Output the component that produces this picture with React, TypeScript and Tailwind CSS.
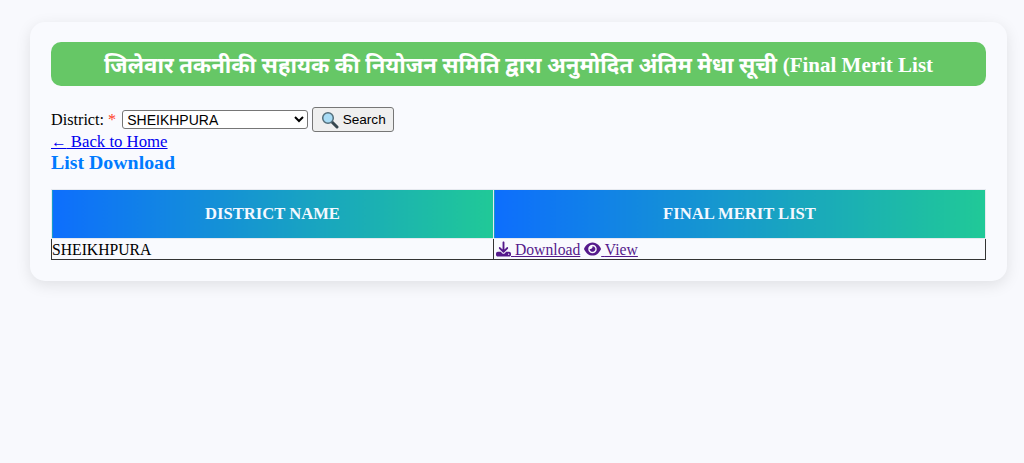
import React from 'react'

const serif = "font-['Liberation_Serif','Noto_Sans','Times_New_Roman',serif]"

const App = () => {
  return (
    <div className={`min-h-[463px] bg-[#f8f9fd] pl-[30px] pr-[17px] pt-[22px] text-black ${serif}`}>
      <div className="h-[259px] rounded-[15px] bg-[#f9fafe] px-[21px] pt-[20px] shadow-[0_4px_15px_rgba(0,0,0,0.1)]">
        <h1 className="mb-[21px] flex h-[44px] items-center justify-center overflow-hidden whitespace-nowrap rounded-[10px] bg-[#66c766] pt-[3px] text-center text-[22.1px] font-bold text-white">
          जिलेवार तकनीकी सहायक की नियोजन समिति द्वारा अनुमोदित अंतिम मेधा सूची&nbsp;<span className="text-[21px]">(Final Merit List</span>
        </h1>
        <div className="flex h-[25px] items-center text-[16.2px] leading-[18px]">
          <label className="mr-[6px]">District: <span className="text-[#ff3b1f]">*</span></label>
          <select defaultValue="SHEIKHPURA" className="mr-[4px] h-[19px] w-[186px] rounded-[3px] border border-[#767676] bg-white px-0 font-['Liberation_Sans',sans-serif] text-[14px]">
            <option>SHEIKHPURA</option>
          </select>
          <button className="flex h-[25px] w-[82px] items-center justify-center gap-[4px] rounded-[3px] border border-[#767676] bg-[#efefef] font-['Liberation_Sans',sans-serif] text-[13.6px]">
            <svg viewBox="0 0 18 18" className="h-[18px] w-[18px]">
              <line x1="10.500" y1="10.500" x2="16" y2="16" stroke="#37474f" strokeWidth="3" strokeLinecap="round" />
              <circle cx="7" cy="7" r="5.300" fill="#a9dcf5" stroke="#546e7a" strokeWidth="1.500" />
            </svg>
            <span>Search</span>
          </button>
        </div>
        <a href="#" className="mt-px block text-[16.75px] leading-[18px] text-[#0000ee] underline"><span className="text-[15.6px]">←</span> Back to Home</a>
        <h2 className="text-[19.85px] font-bold leading-[23px] text-[#007bff]">List Download</h2>
        <table className="mt-[15px] w-full border-collapse text-[15.7px]">
          <thead>
            <tr>
              <th className="h-[49px] w-[442px] border border-[#e6e9ef] bg-[linear-gradient(90deg,#0d6efd,#20c997)] text-[16.6px] font-bold text-[#f4f8ff]">DISTRICT NAME</th>
              <th className="h-[49px] border border-[#e6e9ef] bg-[linear-gradient(90deg,#0d6efd,#20c997)] text-[16.6px] font-bold text-[#f4f8ff]">FINAL MERIT LIST</th>
            </tr>
          </thead>
          <tbody>
            <tr>
              <td className="h-[21px] border border-[#333333] p-0 leading-[17px]">SHEIKHPURA</td>
              <td className="h-[21px] border border-[#333333] px-[2px] py-0 leading-[17px]">
                <a href="#" className="text-[#551a8b] underline">
                  <svg viewBox="0 0 512 512" className="inline h-[16px] w-[15px] align-[-2px] fill-current"><path d="M288 32c0-17.700-14.300-32-32-32s-32 14.300-32 32v242.700l-73.400-73.400c-12.500-12.500-32.800-12.500-45.300 0s-12.500 32.800 0 45.300l128 128c12.500 12.500 32.800 12.500 45.300 0l128-128c12.500-12.500 12.500-32.800 0-45.300s-32.800-12.500-45.300 0L288 274.700V32zM64 352c-35.300 0-64 28.700-64 64v32c0 35.300 28.700 64 64 64h384c35.300 0 64-28.700 64-64v-32c0-35.300-28.700-64-64-64H346.500l-45.300 45.300c-25 25-65.500 25-90.500 0L165.500 352H64zm368 56a24 24 0 1 1 0 48 24 24 0 1 1 0-48z" /></svg>
                  {' '}Download
                </a>{' '}
                <a href="#" className="text-[#551a8b] underline">
                  <svg viewBox="0 0 576 512" className="inline h-[16px] w-[17px] align-[-2px] fill-current"><path d="M288 32c-80.800 0-145.500 36.800-192.600 80.600C48.600 156 17.300 208 2.500 243.700c-3.300 7.900-3.300 16.700 0 24.600C17.300 304 48.600 356 95.400 399.400 142.500 443.200 207.200 480 288 480s145.500-36.800 192.600-80.600c46.800-43.500 78.100-95.400 93-131.100 3.300-7.900 3.300-16.700 0-24.600-14.900-35.700-46.200-87.700-93-131.100C433.500 68.800 368.800 32 288 32zM144 256a144 144 0 1 1 288 0 144 144 0 1 1-288 0zm144-64c0 35.300-28.700 64-64 64-7.100 0-13.900-1.200-20.300-3.300-5.500-1.800-11.900 1.600-11.700 7.400.3 6.900 1.300 13.800 3.200 20.700 13.700 51.200 66.400 81.600 117.600 67.900s81.600-66.400 67.900-117.600c-11.100-41.500-47.800-69.400-88.600-71.100-5.800-.2-9.200 6.100-7.400 11.700 2.100 6.400 3.300 13.200 3.300 20.300z" /></svg>
                  {' '}View
                </a>
              </td>
            </tr>
          </tbody>
        </table>
      </div>
    </div>
  )
}

export default App
